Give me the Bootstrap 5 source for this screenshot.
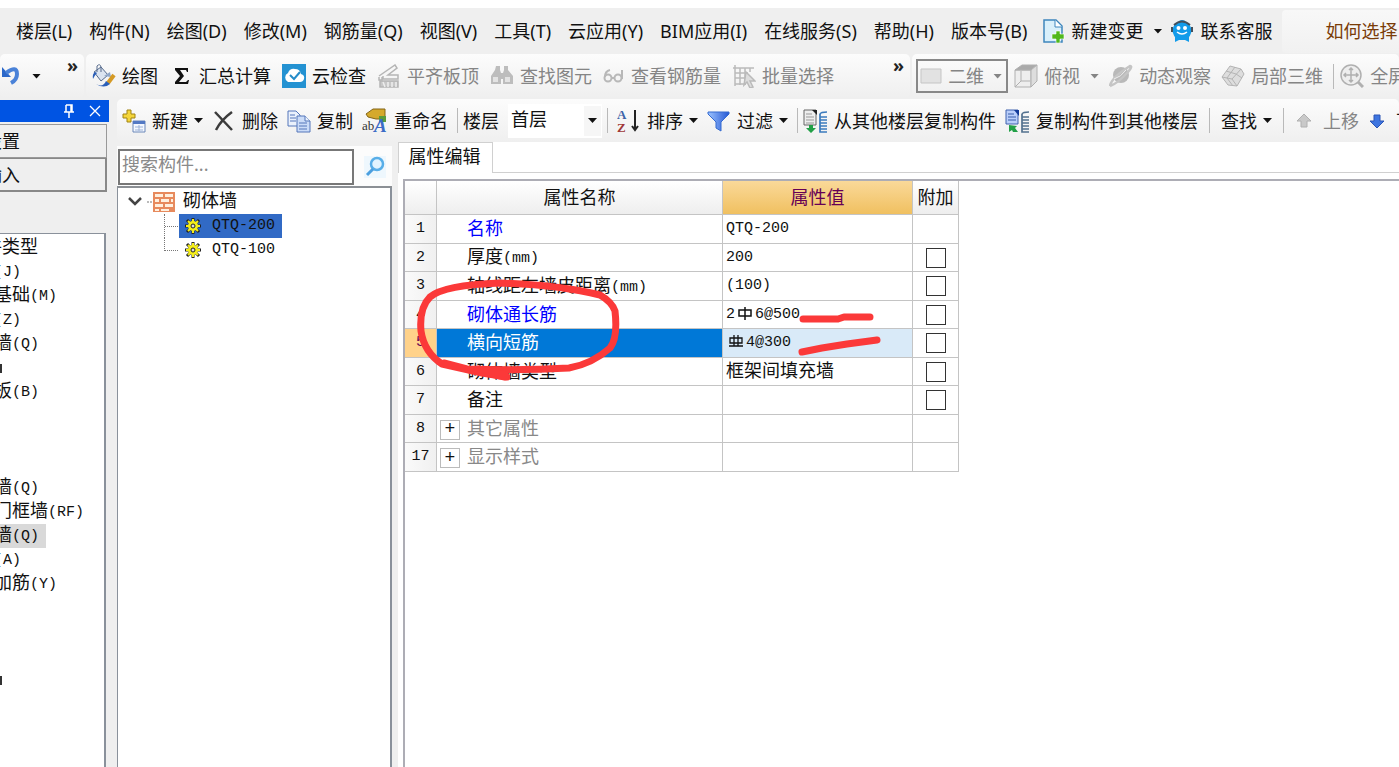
<!DOCTYPE html>
<html lang="zh-CN">
<head>
<meta charset="utf-8">
<meta name="viewport" content="width=device-width, initial-scale=1">
<title>属性编辑</title>
<link href="https://cdn.jsdelivr.net/npm/bootstrap@5.3.0/dist/css/bootstrap.min.css" rel="stylesheet">
<style>
  body { font-family: "Noto Sans", "Noto Sans CJK SC", sans-serif; font-size: 18px; line-height: 24px; color: #111; background: #efefef; white-space: nowrap; overflow: hidden; }
  button { border: 0; background: none; padding: 0; color: inherit; line-height: 24px; }
  svg { display: block; flex: none; }
  .top-gap { height: 8px; background: #fff; }
  .menu-row { height: 46px; }
  .menu-row a { color: inherit; text-decoration: none; }
  .menu-list { gap: 17px; padding-left: 16px; }
  .promo { background: linear-gradient(#f8f8f8, #f1f1f1); border-radius: 4px 0 0 4px; padding-left: 43px; height: 43px; margin-left: 10px; }
  .promo a { color: #7a3c08; }
  .tools { height: 44px; background: linear-gradient(#fcfcfc, #efefef); border-radius: 5px; gap: 10px; padding: 0 6px; }
  .tools.mid { gap: 11px; }
  .tools.views { padding-left: 4px; }
  .tools.edit { gap: 9px; height: 43px; padding-left: 5px; }
  .row-one { gap: 2px; height: 45px; }
  .tool { display: flex; align-items: center; gap: 6px; flex: none; }
  .tool.off { color: #858585; }
  .tri { width: 9px; height: 5px; background: currentColor; clip-path: polygon(0 0, 100% 0, 50% 100%); flex: none; }
  .more { font-weight: 700; align-self: flex-start; line-height: 22px; color: #222; }
  .bar { width: 1px; height: 25px; background: #b9b9b9; flex: none; }
  .bar.wide { margin: 0 2px; }
  .tight { margin-left: -4px; }
  .view-box { border: 2px solid #888; height: 34px; width: 92px; gap: 6px; color: #858585; padding: 0 4px 0 2px; margin-right: -4px; }
  .floor-box { position: relative; width: 94px; }
  .floor-box select { appearance: none; border: 0; border-radius: 0; width: 100%; height: 34px; background: #fff; padding: 0 0 4px 3px; color: inherit; }
  .floor-box .drop { position: absolute; right: 1px; top: 2px; width: 17px; height: 30px; background: #f6f6f6; pointer-events: none; }
  .sim { font-family: "Liberation Mono", "Noto Sans CJK SC", monospace; }
  .lat { font-family: "Liberation Mono", monospace; font-size: 15px; }
  span.lat { vertical-align: 1px; }
  .side { width: 109px; flex: none; padding-top: 1px; }
  .side-title { background: #0054e3; height: 22px; gap: 14px; padding-right: 8px; margin-bottom: 2px; }
  .side-btn { width: 107px; height: 34px; text-align: left; border: 1px solid #999; border-left: 0; overflow: hidden; }
  .side-btn.low { border-width: 1px 2px 2px 0; border-color: #888; }
  .side-btn span { display: block; margin-left: -16px; }
  .type-box { width: 106px; margin-top: 41px; background: #fff; border: solid #8a919b; border-width: 1px 2px 0 0; overflow: hidden; padding-top: 2px; }
  .type-box ul { margin: 0; padding: 0; list-style: none; }
  .type-box li { height: 24px; margin-left: -42px; }
  .type-box li.head { margin-left: -70px; }
  .type-box li.on { background: #d9d9d9; width: 88px; }
  .speck { padding-left: 42px; }
  .speck i { display: block; width: 2px; height: 9px; background: #333; }
  .parts { width: 275px; margin: 4px 0 0 8px; flex: none; }
  .search { height: 42px; background: #fcfcfc; padding: 3px 6px 2px 1px; border-bottom: 2px solid #8b8f94; }
  .search input { width: 236px; height: 36px; border: 2px solid #777; border-radius: 0; padding: 0 2px 6px; color: #111; outline: 0; }
  .search input::placeholder { color: #8a8a8a; opacity: 1; }
  .part-tree { background: #fff; border: solid #8a919b; border-width: 0 2px 0 1px; padding: 2px 0 0 9px; }
  .part-tree .root { height: 24px; gap: 8px; }
  .kid { height: 24px; padding-left: 37px; }
  .kid .dots { width: 15px; height: 24px; border-left: 1px dotted #777; background: linear-gradient(90deg, #777 50%, transparent 50%) 0 12px / 2px 1px repeat-x; }
  .kid:last-child .dots { height: 13px; align-self: flex-start; }
  .kid button { display: flex; align-items: center; gap: 11px; height: 24px; padding: 0 6px; width: 103px; }
  .kid .on { background: #316ac5; }
  .main { margin-left: 6px; min-width: 0; background: #fff; }
  .tab-line { height: 31px; }
  .tab-line button { width: 95px; border: 1px solid #d0d0d0; border-bottom: 0; padding-bottom: 1px; padding-right: 2px; }
  .tab-line div { border-bottom: 1px solid #d0d0d0; }
  .sheet { margin: 6px 0 0 5px; border: solid #adadb5; border-width: 2px 0 0 2px; position: relative; }
  .grid { border-collapse: separate; border-spacing: 0; table-layout: fixed; width: 554px; color: #111; }
  .grid th, .grid td { border: solid #c4c4c4; border-width: 0 1px 1px 0; padding: 0; font-weight: 400; height: 29px; overflow: hidden; }
  .grid tbody tr:nth-child(even) > * { height: 28px; }
  .grid thead th { height: 34px; padding-top: 2px; text-align: center; background: linear-gradient(#fff, #eee); }
  .grid thead th.gold { background: linear-gradient(#fad999, #f0c060); color: #660055; }
  .grid tbody th { text-align: center; background: linear-gradient(90deg, #fafafa, #f0f0f0); }
  .grid td.nm, .grid td.grp { padding-top: 2px; }
  .grid td.nm { padding-left: 30px; }
  .grid td.key { color: #00f; }
  .grid td.grp { color: #888; }
  .grid td.val { padding-left: 3px; }
  .grid tr.sel th { background: #ffd28a; color: #605; }
  .grid tr.sel .nm { background: #0078d7; color: #fff; }
  .grid tr.sel .val { background: #d9eaf8; }
  .grid input { appearance: none; display: block; width: 20px; height: 20px; border: 1px solid #333; margin: 0 auto; background: #fff; }
  .plus { width: 20px; height: 20px; border: 1px solid #bbb; line-height: 17px; margin: 0 7px 0 3px; color: #111; text-align: center; }
  .c-no { width: 32px; } .c-name { width: 286px; } .c-val { width: 190px; } .c-add { width: 46px; }
  .rebar { display: inline-block; vertical-align: -2px; }
  .marks { position: absolute; left: -2px; top: -2px; pointer-events: none; }
</style>
</head>
<body class="vh-100 d-flex flex-column">
<div class="top-gap flex-shrink-0"></div>

<nav class="menu-row d-flex align-items-center flex-shrink-0">
  <div class="menu-list d-flex">
    <a href="#">楼层(L)</a><a href="#">构件(N)</a><a href="#">绘图(D)</a><a href="#">修改(M)</a><a href="#">钢筋量(Q)</a><a href="#">视图(V)</a><a href="#">工具(T)</a><a href="#">云应用(Y)</a><a href="#">BIM应用(I)</a><a href="#">在线服务(S)</a><a href="#">帮助(H)</a><a href="#">版本号(B)</a>
  </div>
  <div class="d-flex ms-3 gap-2">
    <button class="tool"><svg width="22" height="24" viewBox="0 0 22 24"><path d="M1 1h12l6 6v16H1z" fill="#d9f0fb" stroke="#3f87bd" stroke-width="1.5"/><path d="M12 1v7h7" fill="#fff" stroke="#3f87bd"/><path d="M13 12h4v3h4v5h-4v4h-4v-4H9v-5h4z" fill="#4fb81c" stroke="#fff" stroke-width=".6"/></svg>新建变更<span class="tri ms-1"></span></button>
    <button class="tool"><svg width="24" height="24" viewBox="0 0 24 24"><path d="M12 1q3 0 4 2q4 2 5 6q2 1 0 5q-1 3-2 4v5l-4-2H9l-4 2v-5q-1-1-2-4q-2-4 0-5q1-4 5-6q2-2 4-2" fill="#129bea"/><path d="M4 6q8-7 16 0M2 8v5M22 8v5" stroke="#44505c" stroke-width="2" fill="none"/><circle cx="8.500" cy="9" r="2" fill="#fff"/><circle cx="15" cy="9" r="2" fill="#fff"/><path d="M7 13q5 4 10 0" stroke="#fff" stroke-width="1.500" fill="none"/></svg>联系客服</button>
  </div>
  <div class="promo flex-grow-1 d-flex align-items-center overflow-hidden"><a href="#">如何选择</a></div>
</nav>

<div class="row-one d-flex flex-shrink-0">
  <div class="tools d-flex align-items-center ps-0 flex-shrink-0">
    <button class="tool" aria-label="撤销"><svg width="22" height="24" viewBox="0 0 22 24"><path d="M2 3v10h9z" fill="#2c68c9"/><path d="M6 9Q17 1 17 10q0 6-6 9" fill="none" stroke="#4a82d8" stroke-width="4"/></svg><span class="tri ms-1"></span></button>
    <button class="more ms-3">»</button>
  </div>
  <div class="tools mid d-flex align-items-center flex-shrink-0">
    <button class="tool"><svg width="24" height="24" viewBox="0 0 24 24"><path d="M2 8l7-5 7 8-7 6z" fill="#dbe4f0" stroke="#566b8c"/><path d="M5 8V2q3-3 4 1v5" fill="none" stroke="#566b8c"/><path d="M3 8Q0 10 1 15q2-4 4-6z" fill="#2b5fb8"/><path d="M12 12l6-4 1 5z" fill="#8fa7c8"/><path d="M22 11l-6 8" stroke="#d59a25" stroke-width="4"/><path d="M4 20q7 4 10-3l4 3q-6 5-14 0" fill="#2b5fb8"/></svg>绘图</button>
    <button class="tool ms-1"><svg width="20" height="18" viewBox="0 0 20 18"><path d="M2 1h13v4h-1l-1-2H7l4 6-5 6h7l2-2h1l-1 4H2v-2l5-6-5-6z" fill="#111"/></svg>汇总计算</button>
    <button class="tool"><svg width="24" height="24" viewBox="0 0 24 24"><path d="M0 0h24v24H0z" fill="#2492d2"/><path d="M6 18a5 5 0 0 1 0-9q2-5 7-4q5 0 6 5q4 1 3 5q-1 3-4 3z" fill="#fff"/><path d="M8 11l4 4 6-7" stroke="#258cc9" stroke-width="2" fill="none"/></svg>云检查</button>
    <button class="tool off" disabled><svg width="24" height="24" viewBox="0 0 24 24" fill="none" stroke="#b5b5b5" stroke-width="1.500"><path d="M2 12L18 1l2 3-9 7h10v4H6v-3M5 13v3H2v-3"/><path d="M3 17h18v6H3z" fill="#c8c8c8"/><path d="M6 18l2 5m3-5v5m4-5v5m4-5v5" stroke="#eee"/></svg>平齐板顶</button>
    <button class="tool off" disabled><svg width="24" height="24" viewBox="0 0 24 24" fill="#bdbdbd"><path d="M6 2h4v4l1 3v11H1v-8l4-6zM14 2h4v4l5 6v8H13V9l1-3z"/><path d="M9 9h6v6H9z"/><path d="M3 13h5v5H3m12-5h5v5h-5" fill="#e3e3e3"/></svg>查找图元</button>
    <button class="tool off" disabled><svg width="22" height="18" viewBox="0 0 22 18" fill="none" stroke="#b8b8b8" stroke-width="2"><circle cx="5" cy="11" r="3.500"/><circle cx="15" cy="11" r="3.500"/><path d="M2 10Q2 4 7 3M9 11h2M19 12V3"/></svg>查看钢筋量</button>
    <button class="tool off" disabled><svg width="24" height="24" viewBox="0 0 24 24" fill="none" stroke="#bababa" stroke-width="1.500"><path d="M3 1v21M8 4v17M13 4v17M1 4h21M3 9h13M3 14h11M3 20h11M18 4v4"/><path d="M14 8l9 9h-5l3 6-3 1-3-6-3 3z" fill="#ddd"/></svg>批量选择</button>
    <button class="more ms-5">»</button>
  </div>
  <div class="tools views d-flex align-items-center flex-grow-1 overflow-hidden">
    <button class="view-box d-flex align-items-center flex-shrink-0"><svg width="22" height="16" viewBox="0 0 22 16"><path d="M1 1h20v14H1z" fill="#e2e2e2" stroke="#c5c5c5"/></svg>二维<span class="tri ms-auto"></span></button>
    <button class="tool off" disabled><svg width="24" height="24" viewBox="0 0 24 24" fill="#eee" stroke="#b0b0b0"><path d="M1 6h16v17H1z"/><path d="M1 6l7-5h15l-6 5z" fill="#aaa"/><path d="M17 6l6-5v16l-6 6z" fill="#ddd"/><path d="M7 7v10h9M7 17l-6 6" fill="none"/></svg>俯视<span class="tri ms-1"></span></button>
    <button class="tool off" disabled><svg width="24" height="24" viewBox="0 0 24 24"><circle cx="12" cy="11" r="8" fill="#b9b9b9"/><path d="M1 22Q2 14 21 2q3 0-2 6Q8 20 1 22" fill="none" stroke="#c5c5c5" stroke-width="2.500"/><path d="M5 15Q12 13 17 6" stroke="#eee" fill="none"/></svg>动态观察</button>
    <button class="tool off" disabled><svg width="24" height="24" viewBox="0 0 24 24" fill="#ddd" stroke="#b4b4b4"><path d="M1 13L9 2l11 3 3 5-7 12-9-1z"/><path d="M1 13l10 2 5 7M11 15l9-10M5 7l10 3 6 4M14 3L6 14l6 8" fill="none"/></svg>局部三维</button>
    <span class="bar"></span>
    <button class="tool off tight" disabled><svg width="24" height="24" viewBox="0 0 24 24" fill="none" stroke="#b0b0b0"><path d="M18 18l5 5" stroke-width="3"/><circle cx="11" cy="11" r="10" fill="#eee" stroke-width="1.500"/><path d="M11 4v14M4 11h14M9 6l2-2 2 2M9 16l2 2 2-2M6 9l-2 2 2 2M16 9l2 2-2 2" stroke-width="1.500"/></svg>全屏</button>
  </div>
</div>

<div class="d-flex flex-grow-1 overflow-hidden">
  <aside class="side d-flex flex-column">
    <div class="side-title d-flex align-items-center justify-content-end flex-shrink-0">
      <button aria-label="固定"><svg width="12" height="14" viewBox="0 0 12 14" fill="none" stroke="#fff" stroke-width="1.500"><path d="M3 1h6v7M3 1v7M1 8h10M6 8v6M8 1v7"/></svg></button>
      <button aria-label="关闭"><svg width="12" height="12" viewBox="0 0 12 12" stroke="#fff" stroke-width="1.300"><path d="M1 1l10 10M11 1L1 11"/></svg></button>
    </div>
    <button class="side-btn flex-shrink-0"><span>设置</span></button>
    <button class="side-btn low flex-shrink-0"><span>输入</span></button>
    <div class="type-box sim flex-grow-1">
      <ul>
        <li class="head">常用构件类型</li>
        <li>轴线<span class="lat">(J)</span></li>
        <li>筏板基础<span class="lat">(M)</span></li>
        <li>框柱<span class="lat">(Z)</span></li>
        <li>剪力墙<span class="lat">(Q)</span></li>
        <li class="speck d-flex align-items-center"><i></i></li>
        <li>现浇板<span class="lat">(B)</span></li>
        <li></li><li></li><li></li>
        <li>剪力墙<span class="lat">(Q)</span></li>
        <li>人防门框墙<span class="lat">(RF)</span></li>
        <li class="on">砌体墙<span class="lat">(Q)</span></li>
        <li>暗柱<span class="lat">(A)</span></li>
        <li>砌体加筋<span class="lat">(Y)</span></li>
        <li></li><li></li><li></li>
        <li class="speck d-flex align-items-center"><i></i></li>
      </ul>
    </div>
  </aside>

  <div class="flex-grow-1 d-flex flex-column overflow-hidden">
    <div class="tools edit d-flex align-items-center flex-shrink-0 ms-2">
      <button class="tool"><svg width="24" height="24" viewBox="0 0 24 24"><path d="M5 1h4v4h4v4H9v4H5V9H1V5h4z" fill="#f4d53a" stroke="#a08312"/><path d="M11 12h12v11H11z" fill="#f4f8ff" stroke="#6b87b8"/><path d="M11 12h12v3H11z" fill="#5379c4"/><path d="M13 18h8M13 21h8M17 16v6" stroke="#9db3d8"/></svg>新建<span class="tri"></span></button>
      <button class="tool"><svg width="24" height="24" viewBox="0 0 24 24"><path d="M3 3l17 18M20 3Q9 11 4 21" stroke="#3c3c3c" stroke-width="2.500" fill="none"/></svg>删除</button>
      <button class="tool"><svg width="24" height="24" viewBox="0 0 24 24" fill="#eaf1fc" stroke="#5577ba"><path d="M1 2h8l4 4v11H1z"/><path d="M10 7h8l5 5v11H10z" fill="#cbdcf8"/><path d="M18 7v5h5M3 6h5M3 9h6M3 12h6M12 14h8M12 17h8M12 20h8"/></svg>复制</button>
      <button class="tool"><svg width="26" height="26" viewBox="0 0 26 26"><path d="M4 6l7-5h12v10h-9L6 9z" fill="#d5a92c" stroke="#836517"/><path d="M17 8h7v6h-7z" fill="#5a9b3c"/><text x="0" y="22" font-size="13" font-family="Liberation Serif" fill="#333">ab</text><text x="12" y="24" font-size="19" font-style="italic" font-weight="700" font-family="Liberation Serif" fill="#3b6bc6">A</text></svg>重命名</button>
      <span class="bar"></span>
      <label class="tight" for="floor">楼层</label>
      <div class="floor-box flex-shrink-0"><select id="floor"><option>首层</option></select><span class="drop d-flex align-items-center justify-content-center"><span class="tri"></span></span></div>
      <span class="bar tight"></span>
      <button class="tool"><svg width="24" height="24" viewBox="0 0 24 24"><text x="0" y="10" font-size="13" font-weight="700" font-family="Liberation Serif" fill="#3d64a8">A</text><text x="0" y="23" font-size="13" font-weight="700" font-family="Liberation Serif" fill="#9f3838">Z</text><path d="M18 1v20M15 17l3 4 3-4" stroke="#222" stroke-width="2" fill="none"/></svg>排序<span class="tri"></span></button>
      <button class="tool"><svg width="24" height="22" viewBox="0 0 24 22"><defs><linearGradient id="fn"><stop stop-color="#9cc3ff"/><stop offset="1" stop-color="#2558d4"/></linearGradient></defs><path d="M1 2h21v2l-8 8v9l-5-3v-6L1 4z" fill="url(#fn)" stroke="#356bd0"/></svg>过滤<span class="tri"></span></button>
      <span class="bar"></span>
      <button class="tool tight"><svg width="25" height="24" viewBox="0 0 25 24"><path d="M1 1h12v15H1z" fill="#eee" stroke="#666"/><path d="M9 1h5v5z" fill="#222"/><path d="M3 5h6M3 8h8M3 11h8M3 14h8" stroke="#999"/><path d="M6 16h4v3h3l-5 5-5-5h3z" fill="#22a047"/><path d="M17 5q1-2 7-2M17 5v18h7M17 8h7M17 11h7M17 14h7M17 17h7M17 20h7" fill="none" stroke="#3b7bbd" stroke-width="1.700"/></svg>从其他楼层复制构件</button>
      <button class="tool"><svg width="25" height="24" viewBox="0 0 25 24"><path d="M1 1h12v14H1z" fill="#b9cefa" stroke="#4062ae"/><path d="M9 1h5v6z" fill="#123a99"/><path d="M3 5h6M3 8h8M3 11h8" stroke="#365caa"/><path d="M4 16l8 1-2 2 3 4H8l-1-2-3 2z" fill="#22a047"/><path d="M17 5q1-2 7-2M17 5v18h7M17 8h7M17 11h7M17 14h7M17 17h7M17 20h7" fill="none" stroke="#53718f" stroke-width="1.700"/></svg>复制构件到其他楼层</button>
      <span class="bar wide"></span>
      <button class="tool">查找<span class="tri"></span></button>
      <span class="bar wide"></span>
      <button class="tool off" disabled><svg width="18" height="16" viewBox="0 0 18 16"><path d="M9 1l7 7h-4v6H6V8H2z" fill="#c9c9c9" stroke="#b0b0b0"/></svg><span class="ms-1">上移</span></button>
      <button class="tool"><svg width="18" height="16" viewBox="0 0 18 16"><path d="M9 15l7-7h-4V2H6v6H2z" fill="#3e75e0" stroke="#2a55b5"/></svg><span class="ms-1">下移</span></button>
    </div>

    <div class="d-flex flex-grow-1">
      <section class="parts d-flex flex-column">
        <div class="search d-flex align-items-center justify-content-between">
          <input type="text" placeholder="搜索构件..." aria-label="搜索构件">
          <button aria-label="搜索"><svg width="22" height="22" viewBox="0 0 22 22"><path d="M0 0h22v22H0z" fill="#eef7fd"/><circle cx="13" cy="8" r="6" fill="#e2f4ff" stroke="#58aee8" stroke-width="2.500"/><path d="M9 13l-6 6" stroke="#4c9fdf" stroke-width="3"/></svg></button>
        </div>
        <div class="part-tree flex-grow-1 sim">
          <div class="root d-flex align-items-center"><svg width="48" height="22" viewBox="0 0 48 22"><path d="M2 7l6 6 6-6" fill="none" stroke="#444" stroke-width="2.500"/><path d="M20 11h6" stroke="#777" stroke-dasharray="2 1"/><path d="M26 1h22v20H26z" fill="#e78a5d"/><path d="M28 3h8v3h-8zM38 3h8v3h-8zM28 8h4v3h-4zM34 8h8v3h-8zM44 8h2v3h-2zM28 13h8v3h-8zM38 13h8v3h-8zM28 18h4v2h-4zM34 18h8v2h-8z" fill="#fff0df"/></svg>砌体墙</div>
          <div class="kid d-flex"><span class="dots"></span><button class="on"><svg width="16" height="16" viewBox="0 0 16 16"><path d="M8 0v16M0 8h16M2 2l12 12M14 2L2 14" stroke="#222" stroke-width="3"/><path d="M8 1v14M1 8h14M3 3l10 10M13 3L3 13" stroke="#f5ee18" stroke-width="2"/><circle cx="8" cy="8" r="5" fill="#f5ee18"/><circle cx="8" cy="8" r="2" fill="#ddd" stroke="#222"/></svg><span class="lat">QTQ-200</span></button></div>
          <div class="kid d-flex"><span class="dots"></span><button><svg width="16" height="16" viewBox="0 0 16 16"><path d="M8 0v16M0 8h16M2 2l12 12M14 2L2 14" stroke="#222" stroke-width="3"/><path d="M8 1v14M1 8h14M3 3l10 10M13 3L3 13" stroke="#f5ee18" stroke-width="2"/><circle cx="8" cy="8" r="5" fill="#f5ee18"/><circle cx="8" cy="8" r="2" fill="#ddd" stroke="#222"/></svg><span class="lat">QTQ-100</span></button></div>
        </div>
      </section>

      <main class="main flex-grow-1">
        <div class="tab-line d-flex"><button class="sim">属性编辑</button><div class="flex-grow-1"></div></div>
        <div class="sheet sim h-100">
          <table class="grid">
            <colgroup><col class="c-no"><col class="c-name"><col class="c-val"><col class="c-add"></colgroup>
            <thead><tr><th></th><th>属性名称</th><th class="gold">属性值</th><th>附加</th></tr></thead>
            <tbody>
              <tr><th class="lat">1</th><td class="nm key">名称</td><td class="val lat">QTQ-200</td><td></td></tr>
              <tr><th class="lat">2</th><td class="nm">厚度<span class="lat">(mm)</span></td><td class="val lat">200</td><td><input type="checkbox" aria-label="厚度附加"></td></tr>
              <tr><th class="lat">3</th><td class="nm">轴线距左墙皮距离<span class="lat">(mm)</span></td><td class="val lat">(100)</td><td><input type="checkbox" aria-label="距离附加"></td></tr>
              <tr><th class="lat">4</th><td class="nm key">砌体通长筋</td><td class="val lat">2<svg class="rebar" width="20" height="14" viewBox="0 0 20 14" fill="none" stroke="#111" stroke-width="1.500"><path d="M4 4h12v6H4zM10 1v13"/></svg>6@500</td><td><input type="checkbox" aria-label="通长筋附加"></td></tr>
              <tr class="sel"><th class="lat">5</th><td class="nm">横向短筋</td><td class="val lat"><svg class="rebar" width="20" height="14" viewBox="0 0 20 14" fill="none" stroke="#111" stroke-width="1.300"><path d="M4 4h12v5H4zM8 1v11M12 1v11M3 12h14"/></svg>4@300</td><td><input type="checkbox" aria-label="短筋附加"></td></tr>
              <tr><th class="lat">6</th><td class="nm">砌体墙类型</td><td class="val">框架间填充墙</td><td><input type="checkbox" aria-label="类型附加"></td></tr>
              <tr><th class="lat">7</th><td class="nm">备注</td><td class="val"></td><td><input type="checkbox" aria-label="备注附加"></td></tr>
              <tr><th class="lat">8</th><td class="grp"><div class="d-flex align-items-center"><button class="plus">+</button>其它属性</div></td><td></td><td></td></tr>
              <tr><th class="lat">17</th><td class="grp"><div class="d-flex align-items-center"><button class="plus">+</button>显示样式</div></td><td></td><td></td></tr>
            </tbody>
          </table>
          <svg class="marks" width="500" height="220" viewBox="403 179 500 220" fill="none" stroke="#fb3939" stroke-width="7" stroke-linecap="round" stroke-linejoin="round">
            <path d="M507 377L482 373L442 364Q424 352 421 331Q419 308 430 297Q444 285 500 283Q560 285 600 295Q612 302 615 311Q618 338 610 348Q592 364 569 368Q520 371 467 369L444 363"/>
            <path d="M478 370l27 6" stroke-width="9"/>
            <path d="M803 319l35 0 6-2h26M802 352l20-4 25-4 30-4"/>
          </svg>
        </div>
      </main>
    </div>
  </div>
</div>
<script src="https://cdn.jsdelivr.net/npm/bootstrap@5.3.0/dist/js/bootstrap.bundle.min.js"></script>
</body>
</html>
